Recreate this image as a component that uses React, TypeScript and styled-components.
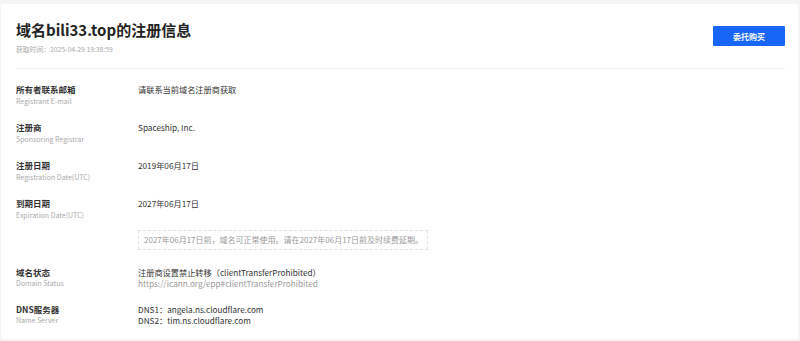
import styled, { createGlobalStyle } from 'styled-components';

const GlobalStyle = createGlobalStyle`
  html, body {
    margin: 0;
    padding: 0;
    background: #f5f5f5;
  }
  body {
    font-family: "Noto Sans CJK SC", "Noto Sans", sans-serif;
    color: #333;
  }
`;

const Card = styled.div`
  margin: 4px 2px 0 1px;
  height: 335px;
  box-sizing: border-box;
  background: #fff;
  padding: 16px 13px 14px 15px;
`;

const Header = styled.div`
  display: flex;
  justify-content: space-between;
  align-items: flex-start;
  padding-bottom: 14px;
  border-bottom: 1px solid #f0f0f0;
`;

const Title = styled.h1`
  margin: 0;
  font-size: 15px;
  line-height: 20px;
  font-weight: 700;
  color: #222;
`;

const FetchTime = styled.div`
  margin-top: 4px;
  font-size: 6.8px;
  line-height: 10px;
  color: #aaa;
`;

const BuyButton = styled.button`
  margin-top: 6px;
  width: 72px;
  height: 20px;
  border: none;
  border-radius: 1px;
  background: #1766f5;
  color: #fff;
  font-family: inherit;
  font-size: 8px;
  font-weight: 700;
  cursor: pointer;
`;

const List = styled.div`
  padding-top: 14px;
`;

const Row = styled.div<{ $top: number; $tight?: boolean }>`
  display: grid;
  grid-template-columns: 122px 1fr;
  margin-top: ${(p) => p.$top}px;
  --lh: ${(p) => (p.$tight ? '11px' : '12px')};
  --sub: ${(p) => (p.$tight ? '10.5px' : '13px')};
`;

const Label = styled.div`
  font-size: 8.5px;
  line-height: var(--lh);
  font-weight: 700;
  color: #333;
`;

const SubLabel = styled.div`
  font-size: 7px;
  line-height: var(--sub);
  color: #aaa;
`;

const Value = styled.div<{ $muted?: boolean }>`
  font-size: 8.2px;
  line-height: ${(p) => (p.$muted !== undefined ? '10.5px' : 'var(--lh)')};
  color: ${(p) => (p.$muted ? '#999' : '#333')};
`;

const Notice = styled.div`
  grid-column: 2;
  justify-self: start;
  box-sizing: border-box;
  height: 20px;
  padding: 0 4px 0 5px;
  border: 1px dashed #e0e0e0;
  font-size: 8px;
  line-height: 18px;
  color: #999;
`;

const rows = [
  { label: '所有者联系邮箱', sub: 'Registrant E-mail', value: '请联系当前域名注册商获取' },
  { label: '注册商', sub: 'Sponsoring Registrar', value: 'Spaceship, Inc.' },
  { label: '注册日期', sub: 'Registration Date(UTC)', value: '2019年06月17日' },
  { label: '到期日期', sub: 'Expiration Date(UTC)', value: '2027年06月17日' },
];

export default function App() {
  return (
    <>
      <GlobalStyle />
      <Card>
        <Header>
          <div>
            <Title>域名bili33.top的注册信息</Title>
            <FetchTime>获取时间：2025-04-29 19:38:59</FetchTime>
          </div>
          <BuyButton>委托购买</BuyButton>
        </Header>
        <List>
          {rows.map((r, i) => (
            <Row key={r.label} $top={i === 0 ? 0 : 13}>
              <div>
                <Label>{r.label}</Label>
                <SubLabel>{r.sub}</SubLabel>
              </div>
              <Value>{r.value}</Value>
            </Row>
          ))}
          <Row $top={8}>
            <Notice>2027年06月17日前，域名可正常使用。请在2027年06月17日前及时续费延期。</Notice>
          </Row>
          <Row $top={17} $tight>
            <div>
              <Label>域名状态</Label>
              <SubLabel>Domain Status</SubLabel>
            </div>
            <div>
              <Value $muted={false}>注册商设置禁止转移（clientTransferProhibited）</Value>
              <Value $muted>https://icann.org/epp#clientTransferProhibited</Value>
            </div>
          </Row>
          <Row $top={15.5} $tight>
            <div>
              <Label>DNS服务器</Label>
              <SubLabel>Name Server</SubLabel>
            </div>
            <div>
              <Value $muted={false}>DNS1：angela.ns.cloudflare.com</Value>
              <Value $muted={false}>DNS2：tim.ns.cloudflare.com</Value>
            </div>
          </Row>
        </List>
      </Card>
    </>
  );
}
